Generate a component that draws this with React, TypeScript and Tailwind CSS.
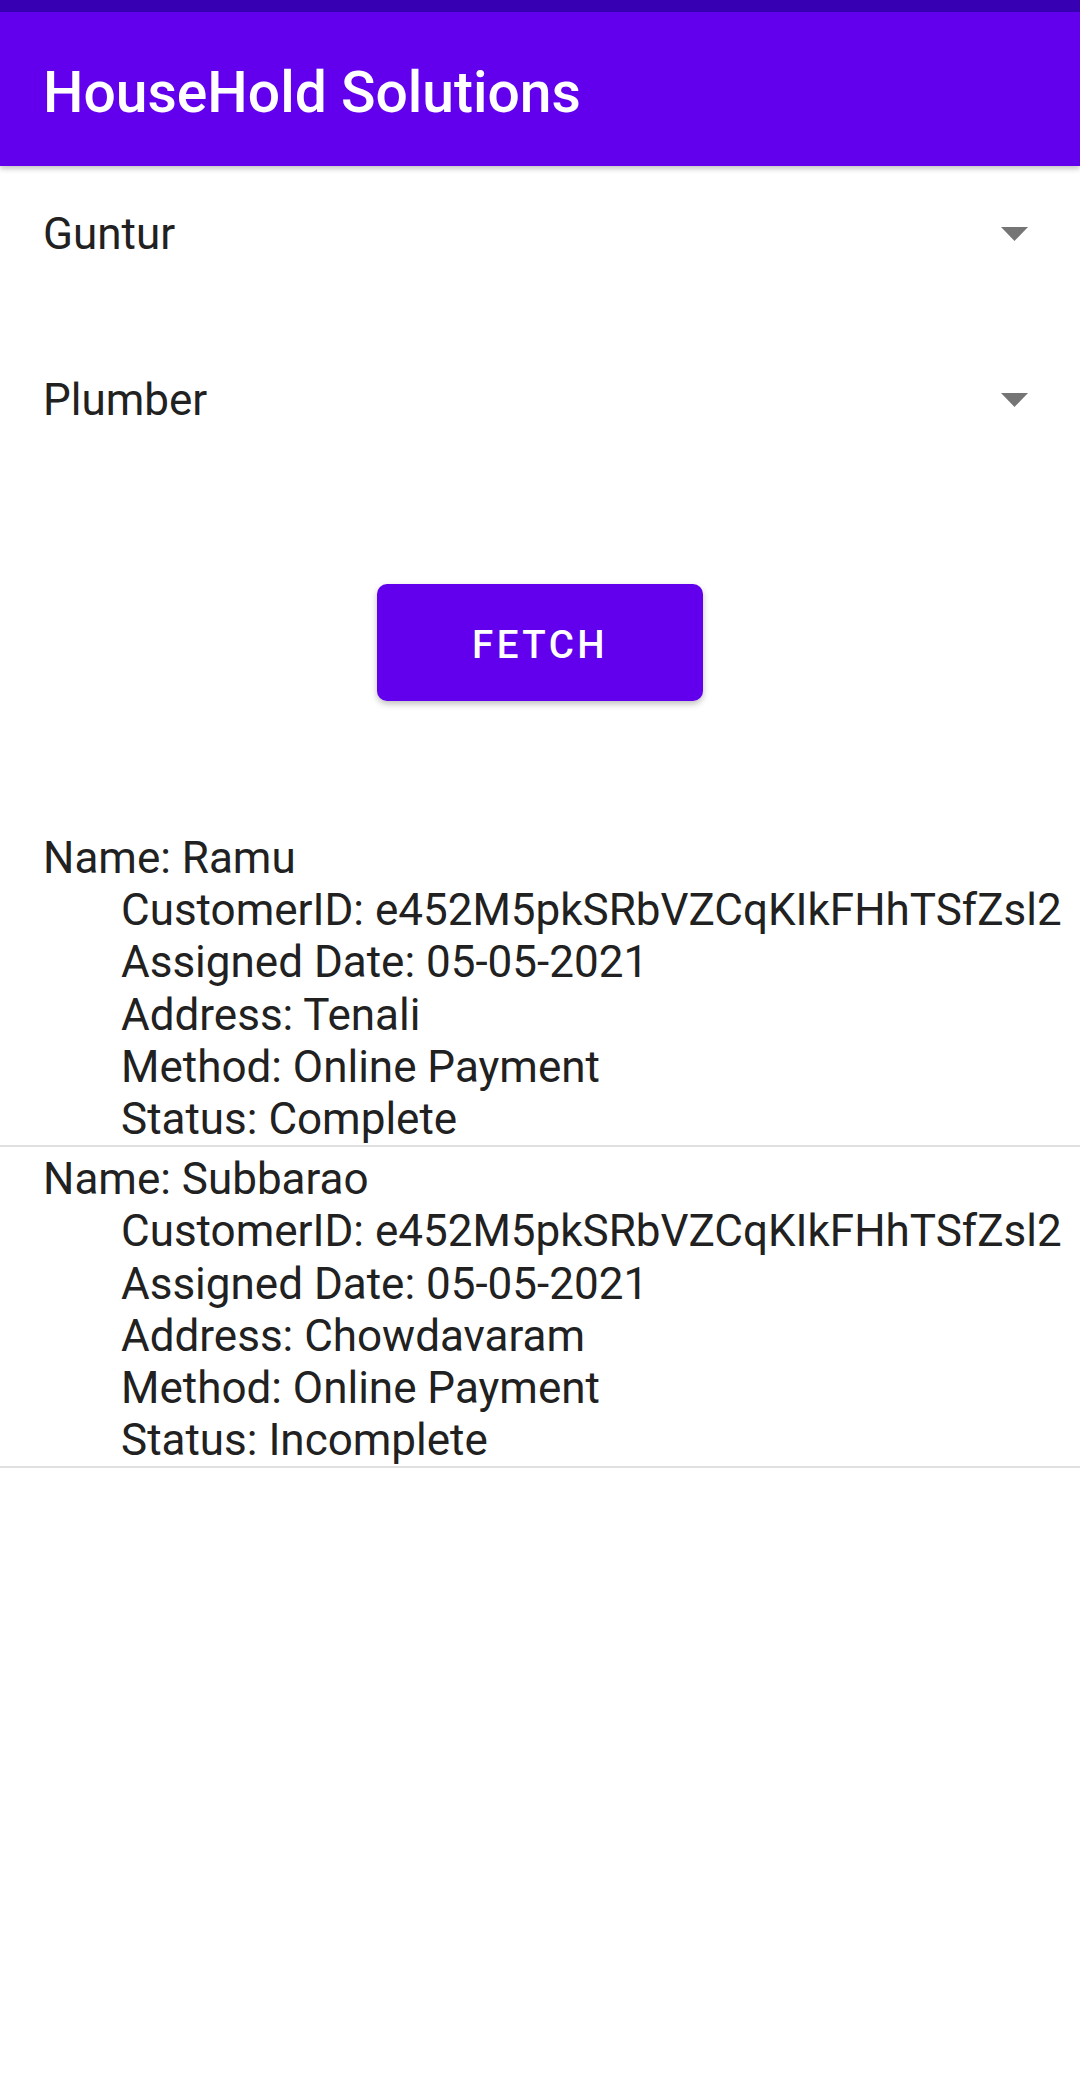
import React from "react";

type Job = {
  name: string;
  customerId: string;
  date: string;
  address: string;
  method: string;
  status: string;
};

const jobs: Job[] = [
  {
    name: "Ramu",
    customerId: "e452M5pkSRbVZCqKIkFHhTSfZsl2",
    date: "05-05-2021",
    address: "Tenali",
    method: "Online Payment",
    status: "Complete",
  },
  {
    name: "Subbarao",
    customerId: "e452M5pkSRbVZCqKIkFHhTSfZsl2",
    date: "05-05-2021",
    address: "Chowdavaram",
    method: "Online Payment",
    status: "Incomplete",
  },
];

function Caret() {
  return (
    <svg width={27} height={14} viewBox="0 0 27 14" fill="none">
      <path d="M0 0H27L13.5 14Z" fill="#757575" />
    </svg>
  );
}

function Spinner({ value, className }: { value: string; className?: string }) {
  return (
    <div className={`flex h-[52px] items-center justify-between pl-[43px] pr-[52px] ${className ?? ""}`}>
      <span className="text-[44px] leading-[52px] text-[#212121]">{value}</span>
      <Caret />
    </div>
  );
}

export default function App() {
  return (
    <div className="min-h-[2096px] w-full bg-white font-['Roboto',sans-serif]">
      {/* status bar + toolbar */}
      <div className="h-[12px] bg-[#3700b3]" />
      <header className="relative z-10 h-[154px] bg-[#6200ee] pl-[43px] pt-[49px] shadow-[0_3px_5px_rgba(0,0,0,0.22)]">
        <h1 className="text-[57px] font-medium leading-[64px] text-white">HouseHold Solutions</h1>
      </header>

      <div className="pt-[42px]">
        <Spinner value="Guntur" />
        <Spinner value="Plumber" className="mt-[114px]" />
      </div>

      <div className="mt-[158px] flex justify-center">
        <button className="h-[117px] w-[326px] rounded-[10px] bg-[#6200ee] pt-[5px] text-[38.5px] font-medium tracking-[0.09em] text-white shadow-[0_3px_6px_rgba(0,0,0,0.25)]">
          FETCH
        </button>
      </div>

      <ul className="mt-[125px]">
        {jobs.map((j, i) => (
          <li key={i} className="border-b-2 border-[#e0e0e0] pt-[6px] text-[44px] leading-[52.2px] text-[#212121]">
            <div className="pl-[43px]">Name: {j.name}</div>
            <div className="pl-[121px]">
              <div>CustomerID: {j.customerId}</div>
              <div>Assigned Date: {j.date}</div>
              <div>Address: {j.address}</div>
              <div>Method: {j.method}</div>
              <div>Status: {j.status}</div>
            </div>
          </li>
        ))}
      </ul>
    </div>
  );
}
